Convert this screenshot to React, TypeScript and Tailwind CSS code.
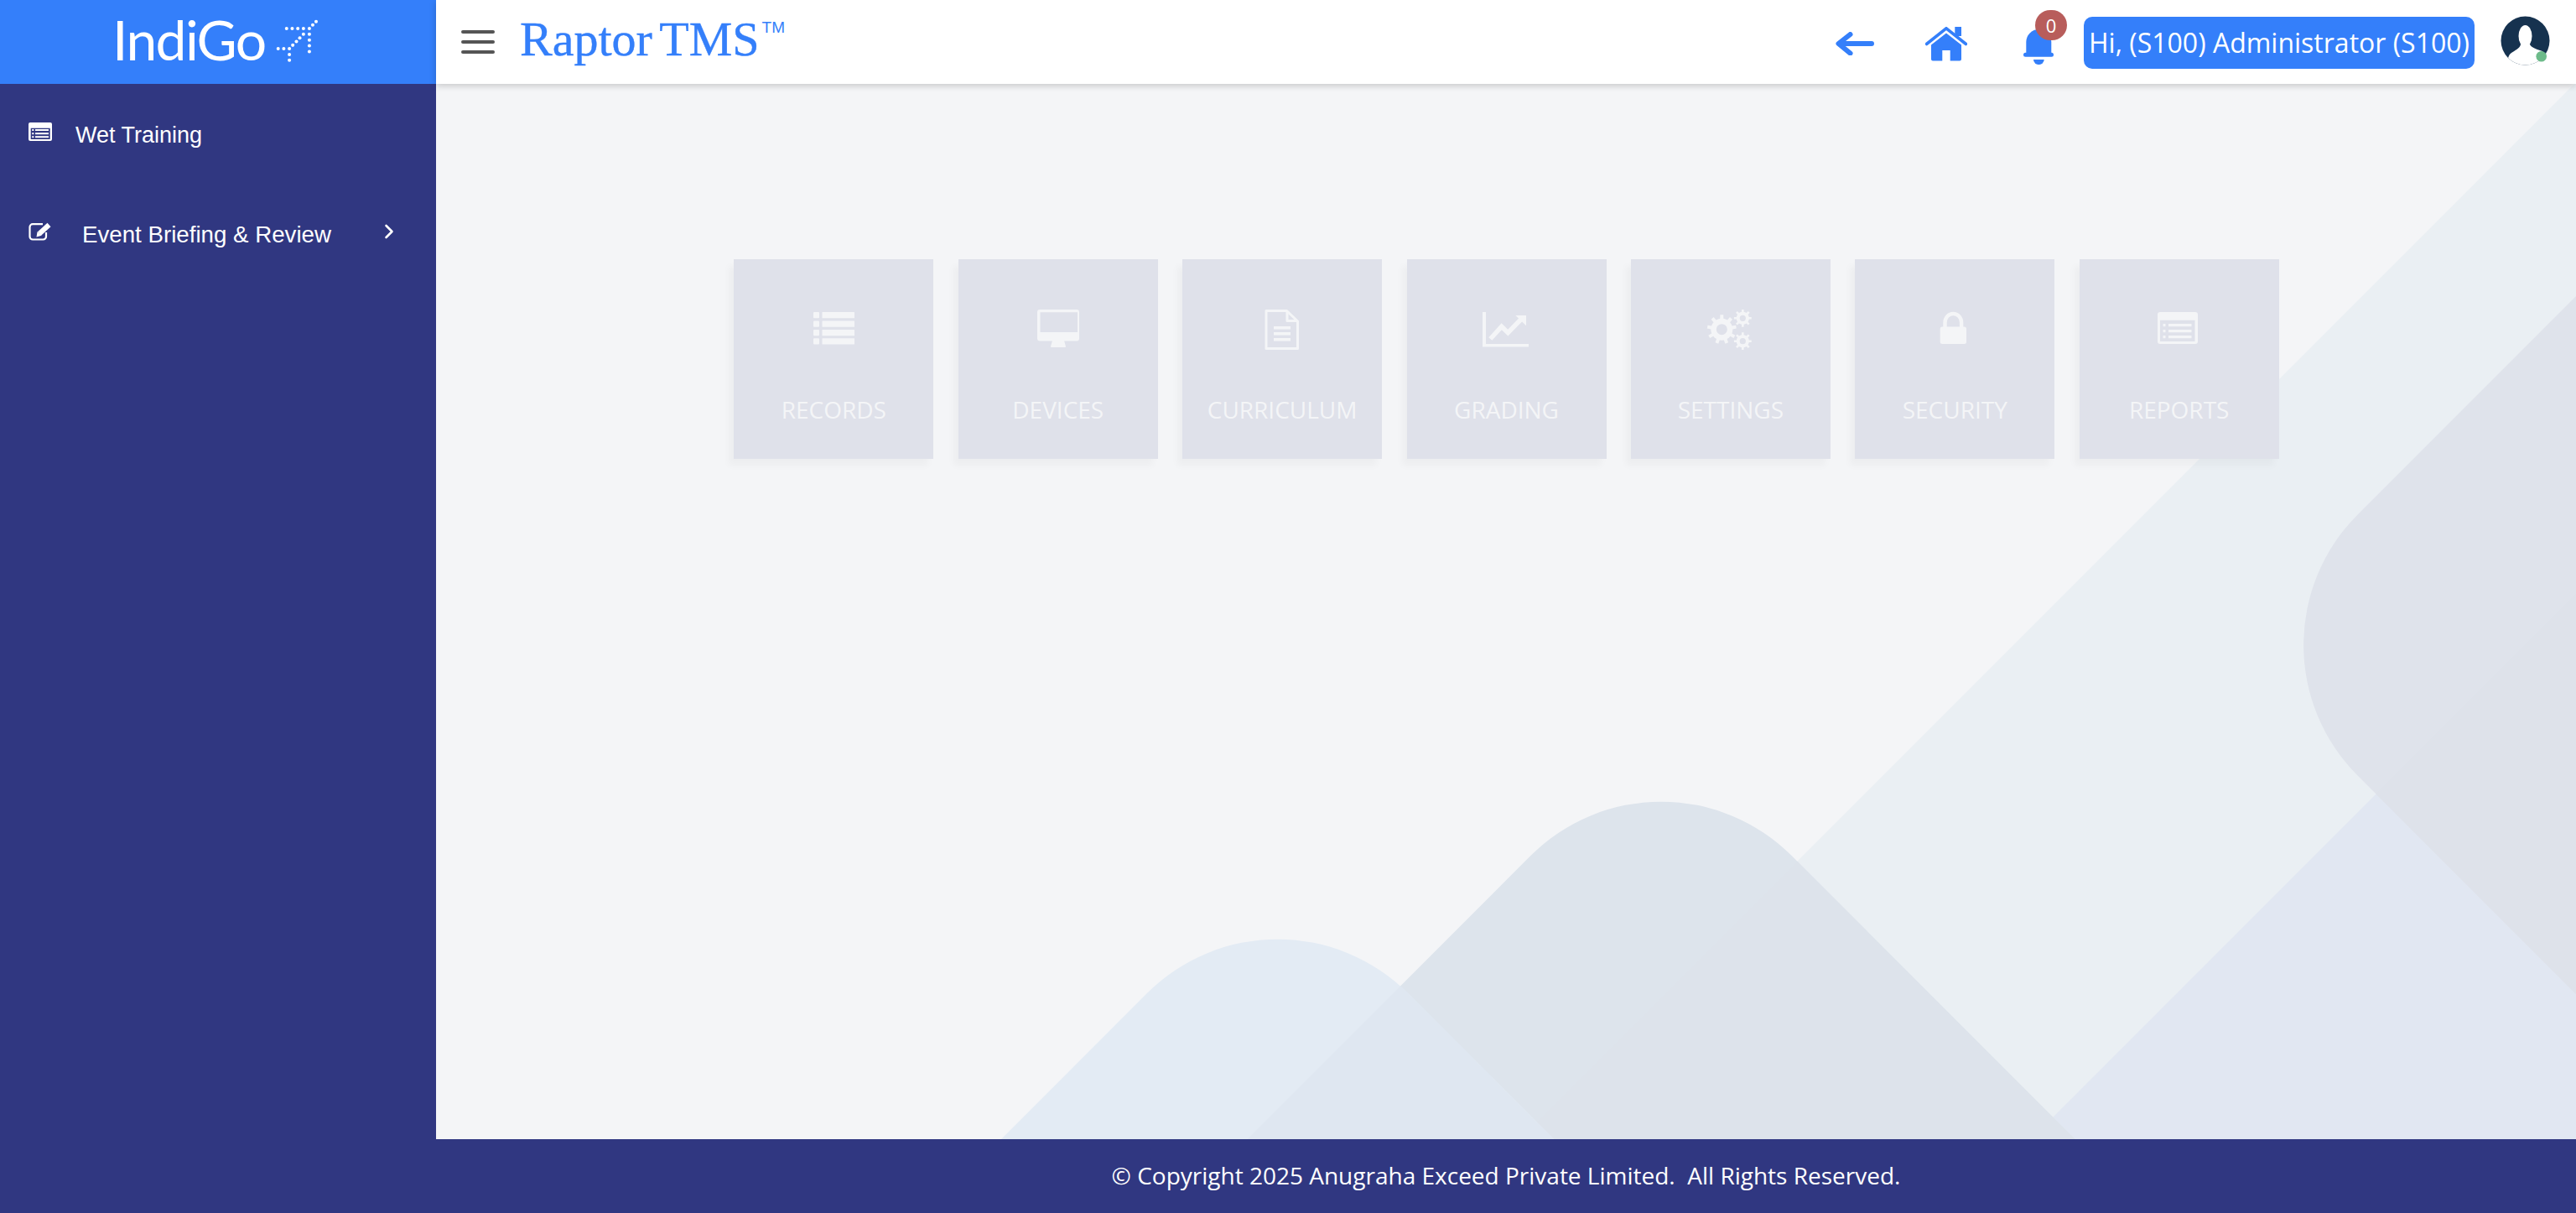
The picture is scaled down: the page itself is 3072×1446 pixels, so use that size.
import React from "react";

const gear = (cx: number, cy: number, ro: number, ri: number, hole: number, teeth: number) => {
  let d = "";
  const step = (Math.PI * 2) / teeth;
  for (let i = 0; i < teeth; i++) {
    const a = i * step - Math.PI / 2;
    const pts: [number, number][] = [
      [ri, a - step * 0.5],
      [ri, a - step * 0.22],
      [ro, a - step * 0.16],
      [ro, a + step * 0.16],
      [ri, a + step * 0.22],
    ];
    pts.forEach(([r, t], j) => {
      d += `${i === 0 && j === 0 ? "M" : "L"}${(cx + r * Math.cos(t)).toFixed(2)} ${(cy + r * Math.sin(t)).toFixed(2)}`;
    });
  }
  d += `Z M${cx - hole} ${cy} a${hole} ${hole} 0 1 0 ${hole * 2} 0 a${hole} ${hole} 0 1 0 ${-hole * 2} 0Z`;
  return d;
};

const C = "#f4f5f7";

const IconBox = ({ children }: { children: React.ReactNode }) => (
  <svg width="64" height="48" viewBox="0 0 64 48" fill={C}>
    {children}
  </svg>
);

const cards: { label: string; icon: React.ReactNode }[] = [
  {
    label: "RECORDS",
    icon: (
      <IconBox>
        {[3, 13.5, 24, 34.2].map((y) => (
          <g key={y}>
            <rect x="8" y={y} width="7" height="7.3" rx="1" />
            <rect x="18.5" y={y} width="38.5" height="7.3" rx="0.5" />
          </g>
        ))}
      </IconBox>
    ),
  },
  {
    label: "DEVICES",
    icon: (
      <IconBox>
        <path
          fillRule="evenodd"
          d="M10 0H54a3 3 0 0 1 3 3V34.5a3 3 0 0 1-3 3H10a3 3 0 0 1-3-3V3a3 3 0 0 1 3-3ZM10.5 3.3V27H55V3.3Z"
        />
        <path d="M25 37H39L41 44a1 1 0 0 1-1 1H24a1 1 0 0 1-1-1Z" />
      </IconBox>
    ),
  },
  {
    label: "CURRICULUM",
    icon: (
      <IconBox>
        <path d="M13 1.5H37.5L50.5 14V46.5H13Z" fill="none" stroke={C} strokeWidth="3" strokeLinejoin="round" />
        <path d="M38 2V13.5H50" fill="none" stroke={C} strokeWidth="3" strokeLinejoin="round" />
        <rect x="22" y="20" width="20" height="3.6" />
        <rect x="22" y="27" width="20" height="3.6" />
        <rect x="22" y="34" width="20" height="3.6" />
      </IconBox>
    ),
  },
  {
    label: "GRADING",
    icon: (
      <IconBox>
        <rect x="3" y="3" width="4" height="41" />
        <rect x="3" y="41" width="55" height="3.5" />
        <path d="M12.3 35L25.7 20.3L33.3 27.7L49 11.5" fill="none" stroke={C} strokeWidth="5.5" />
        <path d="M55 7H42.3L55 19.3Z" />
      </IconBox>
    ),
  },
  {
    label: "SETTINGS",
    icon: (
      <IconBox>
        <path fillRule="evenodd" d={gear(21.3, 23.7, 17.5, 13, 6.5, 9)} />
        <path fillRule="evenodd" d={gear(46.3, 10.3, 10.5, 7.6, 3.6, 8)} />
        <path fillRule="evenodd" d={gear(46.3, 37.7, 10.5, 7.6, 3.6, 8)} />
      </IconBox>
    ),
  },
  {
    label: "SECURITY",
    icon: (
      <IconBox>
        <rect x="14.7" y="20.5" width="31.3" height="20.5" rx="2.5" />
        <path d="M20.5 22V15.5a9.8 10.5 0 0 1 19.6 0V22" fill="none" stroke={C} strokeWidth="4.4" />
      </IconBox>
    ),
  },
  {
    label: "REPORTS",
    icon: (
      <IconBox>
        <path
          fillRule="evenodd"
          d="M9 3H51a3 3 0 0 1 3 3V38a3 3 0 0 1-3 3H9a3 3 0 0 1-3-3V6a3 3 0 0 1 3-3ZM9 12.7V38H50.5V12.7Z"
        />
        {[17, 24, 31].map((y) => (
          <g key={y}>
            <rect x="12.5" y={y} width="3" height="3.2" />
            <rect x="19" y={y} width="27.5" height="3.2" />
          </g>
        ))}
      </IconBox>
    ),
  },
];

const M1 = "M1194 1358L1367.9 1184.1A220 220 0 0 1 1679.1 1184.1L1853 1358Z";
const M2 = "M1487.5 1358L1825.4 1020.1A220 220 0 0 1 2136.6 1020.1L2474.5 1358Z";
const BAND = "M3072 98L1812 1358H3072Z";
const M3 = "M2422 1358L3072 708V1358Z";
const RIGHT = "M3072 353L2811.6 613.4A220 220 0 0 0 2811.6 924.6L3072 1185Z";

const Backdrop = () => (
  <svg className="absolute inset-0 h-full w-full" viewBox="520 100 2552 1258" preserveAspectRatio="none">
    <defs>
      <clipPath id="clipBand">
        <path d={BAND} />
      </clipPath>
      <clipPath id="clipM2">
        <path d={M2} />
      </clipPath>
      <clipPath id="clipM3">
        <path d={M3} />
      </clipPath>
    </defs>
    <path d={BAND} fill="#eaeff3" />
    <path d={M3} fill="#e1e7f2" />
    <path d={M2} fill="#dde4ec" />
    <path d={M2} fill="#dde3eb" clipPath="url(#clipBand)" />
    <path d={M1} fill="#e3ebf4" />
    <path d={M1} fill="#dfe7f1" clipPath="url(#clipM2)" />
    <path d={RIGHT} fill="#dfe3eb" />
    <path d={RIGHT} fill="#dee2ea" clipPath="url(#clipM3)" />
  </svg>
);

const logoDots: [number, number][] = [
  [1118, 66], [1106, 78], [1094, 91], [1073, 91], [1053, 91], [1033, 91], [1013, 91], [1073, 111], [1094, 111],
  [1060, 124], [1094, 132], [1048, 137], [1035, 150], [1094, 152], [1023, 162], [1003, 162], [983, 162],
  [1094, 173], [1023, 183], [1023, 203],
];

export default function App() {
  return (
    <div className="flex h-screen w-full overflow-hidden bg-[#f4f5f7] font-['Liberation_Sans',sans-serif]">
      <aside className="flex w-[520px] shrink-0 flex-col bg-[#303781] text-white">
        <div className="flex h-[100px] items-center bg-[#347ffa] pl-[134px]">
          <span className="mb-[6px] font-['Lato',sans-serif] text-[66px] leading-none font-normal tracking-[-1.6px] text-white">
            IndiGo
          </span>
          <svg className="mb-[4px] ml-[12px]" width="52" height="52" viewBox="975 55 155 155" fill="#fff">
            {logoDots.map(([x, y]) => (
              <circle key={`${x}-${y}`} cx={x} cy={y} r="6" />
            ))}
          </svg>
        </div>
        <nav className="flex flex-col">
          <div className="flex h-[122px] items-center pl-[34px]">
            <svg className="mb-[8px]" width="28" height="22" viewBox="0 0 28 22" fill="#fff">
              <path
                fillRule="evenodd"
                d="M2 0H26a2 2 0 0 1 2 2V20a2 2 0 0 1-2 2H2a2 2 0 0 1-2-2V2a2 2 0 0 1 2-2ZM2.7 6.7V20H25.7V6.7Z"
              />
              <rect x="4.2" y="8" width="2.2" height="2" />
              <rect x="8" y="8" width="16" height="2" />
              <rect x="4.2" y="12.2" width="2.2" height="2" />
              <rect x="8" y="12.2" width="16" height="2" />
              <rect x="4.2" y="16.2" width="2.2" height="2" />
              <rect x="8" y="16.2" width="16" height="2" />
            </svg>
            <span className="ml-[28px] text-[27px] leading-none">Wet Training</span>
          </div>
          <div className="flex h-[116px] items-center pl-[34px]">
            <svg width="28" height="22" viewBox="0 0 28 22" fill="none" className="mb-[8px]">
              <path
                d="M17 2.2H5a3.5 3.5 0 0 0-3.5 3.5V17a3.5 3.5 0 0 0 3.5 3.5h12.5A3.5 3.5 0 0 0 21 17v-5"
                stroke="#fff"
                strokeWidth="2.2"
              />
              <path d="M13 13.5L24.5 3" stroke="#fff" strokeWidth="6" />
              <path d="M9.5 17.5L10.6 11L15.6 15.8Z" fill="#fff" />
            </svg>
            <span className="ml-[36px] text-[27.7px] leading-none">Event Briefing &amp; Review</span>
            <svg className="mb-[8px] ml-[63px]" width="12" height="18" viewBox="0 0 12 18" fill="none">
              <path d="M2.5 2L9.5 9L2.5 16" stroke="#fff" strokeWidth="2.6" strokeLinecap="round" strokeLinejoin="round" />
            </svg>
          </div>
        </nav>
      </aside>

      <div className="flex min-w-0 flex-1 flex-col">
        <header className="relative z-10 flex h-[100px] shrink-0 items-center bg-white pr-[30px] pl-[30px] shadow-[0_2px_8px_rgba(0,0,0,0.2)]">
          <div className="flex w-[40px] flex-col gap-[8px]">
            <div className="h-[4px] rounded-sm bg-[#555555]" />
            <div className="h-[4px] rounded-sm bg-[#555555]" />
            <div className="h-[4px] rounded-sm bg-[#555555]" />
          </div>
          <div className="mb-[6px] ml-[30px] flex items-start font-['Liberation_Serif',serif] text-[#347ffa]">
            <span className="text-[58px] leading-none [-webkit-text-stroke:0.4px_#347ffa] [word-spacing:-5px]">
              Raptor TMS
            </span>
            <span className="mt-[5px] ml-[3px] font-['Liberation_Sans',sans-serif] text-[19px] leading-none">TM</span>
          </div>
          <svg className="mt-[4px] ml-auto" width="46" height="28" viewBox="0 0 46 28" fill="none">
            <path
              d="M43 14H4M17.5 3L3.5 14L17.5 25.5"
              stroke="#347ffa"
              strokeWidth="6"
              strokeLinecap="round"
              strokeLinejoin="round"
            />
          </svg>
          <svg className="mt-[4px] ml-[61px]" width="50" height="41" viewBox="0 0 50 41" fill="#347ffa">
            <path d="M1.5 20.5L25 1.8L48.5 20.5" fill="none" stroke="#347ffa" strokeWidth="3.6" strokeLinecap="round" />
            <rect x="35.3" y="0" width="7.7" height="11" />
            <path
              fillRule="evenodd"
              d="M25 7.5L43 21.5V38.5a2 2 0 0 1-2 2H9a2 2 0 0 1-2-2V21.5ZM20.3 28V40.5H29.7V28Z"
            />
          </svg>
          <div className="relative mt-[8px] ml-[67px] h-[46px] w-[36px]">
            <svg width="36" height="46" viewBox="0 0 36 46" fill="#347ffa">
              <path d="M3.3 33V19a15 15 0 0 1 30 0V33Z" />
              <rect x="0" y="31.7" width="36" height="5" rx="2.5" />
              <path d="M12 40H24.7A6.3 6 0 0 1 12 40Z" />
            </svg>
            <span className="absolute top-[-19px] left-[14px] flex h-[36px] w-[38px] items-center justify-center rounded-full bg-[#b85d5b] font-['Open_Sans',sans-serif] text-[22px] leading-none text-white">
              0
            </span>
          </div>
          <div className="mt-[2px] ml-[36px] flex h-[62px] w-[466px] items-center justify-center rounded-[10px] bg-[#347ffa] font-['Open_Sans',sans-serif] text-[32px] leading-none whitespace-nowrap text-white">
            Hi, (S100) Administrator (S100)
          </div>
          <svg className="mb-[3px] ml-[31px]" width="60" height="60" viewBox="0 0 60 60">
            <defs>
              <clipPath id="avatarClip">
                <circle cx="29.5" cy="29.5" r="29" />
              </clipPath>
            </defs>
            <circle cx="29.5" cy="29.5" r="29" fill="#16324f" />
            <g clipPath="url(#avatarClip)" fill="#fff">
              <ellipse cx="29.5" cy="24" rx="8" ry="13" />
              <path d="M24 34H35C37 38 44 40 50 42L58 62H8C8 52 9 47 13 44C17 41 23 39 24 34Z" />
            </g>
            <circle cx="48.7" cy="48.3" r="6.3" fill="#6dbb8a" />
          </svg>
        </header>

        <main className="relative min-h-0 flex-1">
          <Backdrop />
          <div className="relative flex justify-center gap-[29.4px] pt-[209px] pl-[1px]">
            {cards.map((c) => (
              <div
                key={c.label}
                className="flex h-[238px] w-[238px] flex-col items-center bg-[#dfe1ea] pt-[60px] shadow-[-6px_8px_8px_rgba(0,0,0,0.03)]"
              >
                {c.icon}
                <span className="mt-[57px] font-['Open_Sans',sans-serif] text-[28px] leading-none text-[#f4f5f7]">
                  {c.label}
                </span>
              </div>
            ))}
          </div>
        </main>

        <footer className="relative z-10 flex h-[88px] shrink-0 items-center justify-center bg-[#303781] pb-[2px] font-['Open_Sans',sans-serif] text-[28px] text-white">
          © Copyright 2025 Anugraha Exceed Private Limited.&nbsp; All Rights Reserved.
        </footer>
      </div>
    </div>
  );
}
